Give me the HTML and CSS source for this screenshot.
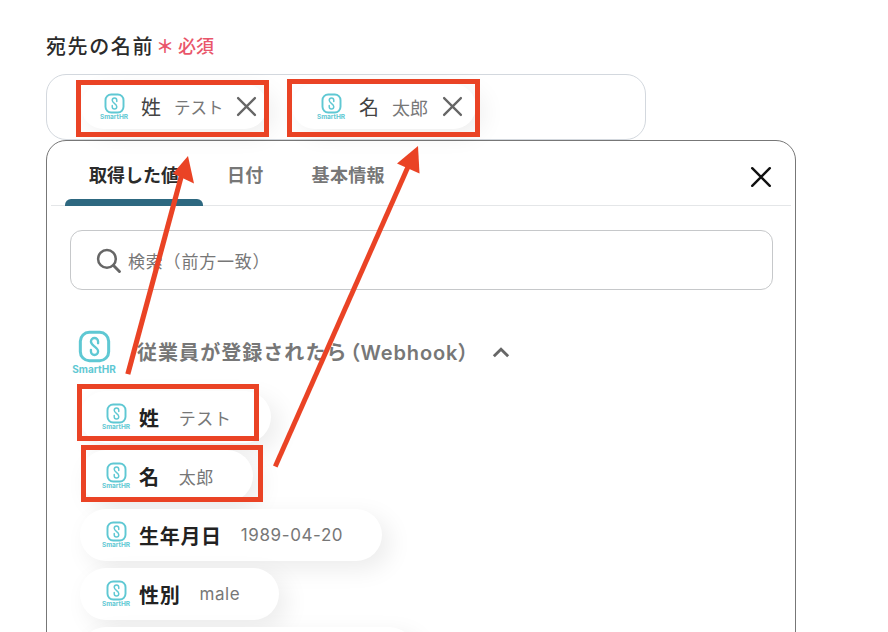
FILE: index.html
```html
<!DOCTYPE html>
<html lang="ja">

<head>
    <meta charset="UTF-8">
    <title>宛先の名前</title>
    <link rel="stylesheet" href="styles.css">
</head>

<body>
    <svg class="defs" width="0" height="0">
        <symbol id="hr-icon" viewBox="0 0 24 24">
            <rect x="1.7" y="1.7" width="20.600" height="20.600" rx="6.500" fill="none" stroke="#5fc8d3" stroke-width="2.2" />
            <path d="M14.600 9.600V8.400a2.600 2.600 0 0 0-5.200 0c0 1.700 1 2.400 2.600 3.600s2.600 1.900 2.600 3.600a2.600 2.600 0 0 1-5.200 0v-1.200" fill="none" stroke="#5fc8d3" stroke-width="1.700" stroke-linecap="round" />
        </symbol>
        <symbol id="close-icon" viewBox="0 0 20 20">
            <path d="M2 2L18 18M18 2L2 18" fill="none" stroke="currentColor" stroke-width="2.200" stroke-linecap="round" />
        </symbol>
    </svg>

    <div class="page">
        <div class="label">
            <span class="label-name">宛先の名前</span>
            <span class="label-star">＊</span>
            <span class="label-req">必須</span>
        </div>

        <div class="field">
            <div class="tag tag-first">
                <div class="logo"><svg><use href="#hr-icon" /></svg><span>SmartHR</span></div>
                <span class="tag-name">姓</span>
                <span class="tag-value">テスト</span>
                <svg class="tag-close"><use href="#close-icon" /></svg>
            </div>
            <div class="tag tag-second">
                <div class="logo"><svg><use href="#hr-icon" /></svg><span>SmartHR</span></div>
                <span class="tag-name">名</span>
                <span class="tag-value">太郎</span>
                <svg class="tag-close"><use href="#close-icon" /></svg>
            </div>
        </div>

        <div class="panel">
            <div class="tabs">
                <div class="tab tab-active">取得した値</div>
                <div class="tab">日付</div>
                <div class="tab">基本情報</div>
                <svg class="panel-close"><use href="#close-icon" /></svg>
            </div>

            <div class="search">
                <svg class="search-icon" viewBox="0 0 24 24">
                    <circle cx="10.500" cy="10.500" r="8.500" fill="none" stroke="#666" stroke-width="2.400" />
                    <path d="M16.800 16.800L22.500 22.500" fill="none" stroke="#666" stroke-width="2.800" stroke-linecap="round" />
                </svg>
                <span>検索（前方一致）</span>
            </div>

            <div class="group">
                <div class="logo logo-big"><svg><use href="#hr-icon" /></svg><span>SmartHR</span></div>
                <span class="group-title">従業員が登録されたら<span class="group-api">（Webhook）</span></span>
                <svg class="chevron" viewBox="0 0 16 10">
                    <path d="M1.500 8.500L8 2L14.500 8.500" fill="none" stroke="#666" stroke-width="2.600" />
                </svg>
            </div>

            <div class="chips">
                <div class="chip">
                    <div class="logo"><svg><use href="#hr-icon" /></svg><span>SmartHR</span></div>
                    <span class="chip-name">姓</span>
                    <span class="chip-value">テスト</span>
                </div>
                <div class="chip">
                    <div class="logo"><svg><use href="#hr-icon" /></svg><span>SmartHR</span></div>
                    <span class="chip-name">名</span>
                    <span class="chip-value">太郎</span>
                </div>
                <div class="chip">
                    <div class="logo"><svg><use href="#hr-icon" /></svg><span>SmartHR</span></div>
                    <span class="chip-name">生年月日</span>
                    <span class="chip-value">1989-04-20</span>
                </div>
                <div class="chip">
                    <div class="logo"><svg><use href="#hr-icon" /></svg><span>SmartHR</span></div>
                    <span class="chip-name">性別</span>
                    <span class="chip-value">male</span>
                </div>
                <div class="chip chip-cut"></div>
            </div>
        </div>

        <!-- red annotations drawn over the screenshot -->
        <svg class="marks" viewBox="0 0 888 632">
            <g fill="none" stroke="#ea4325" stroke-width="5">
                <rect x="78.500" y="82.500" width="188" height="52" />
                <rect x="289.500" y="81.500" width="188" height="53" />
                <rect x="79.500" y="386.500" width="177" height="52" />
                <rect x="83.500" y="447.500" width="177" height="52" />
            </g>
            <g fill="#ea4325">
                <path d="M125.300 373.500L130.300 374.700L184 176L179 175Z" />
                <path d="M188 156L173 173.500L194 183.500Z" />
                <path d="M273 465.500L277.500 467.500L411.500 165L407 163Z" />
                <path d="M418 146L397 163.500L419.500 173.500Z" />
            </g>
        </svg>
    </div>
</body>

</html>
```

FILE: styles.css
```css
html,
body {
    margin: 0;
    height: 100%;
    overflow: hidden;
    background: #fff;
}

body {
    font-family: Inter, "Noto Sans CJK JP", sans-serif;
    color: #333;
}

.defs {
    position: absolute;
}

.page {
    position: relative;
    width: 888px;
    height: 632px;
    overflow: hidden;
    padding: 30px 0 0 46px;
    box-sizing: border-box;
}

.marks {
    position: absolute;
    left: 0;
    top: 0;
    width: 888px;
    height: 632px;
}

.label {
    display: flex;
    align-items: center;
    height: 30px;
}

.label-name {
    font-size: 20px;
    font-weight: 500;
    letter-spacing: 1.600px;
    color: #2b2b2b;
}

.label-star {
    margin-left: 2px;
    width: 22px;
    font-size: 18px;
    font-weight: 700;
    color: #e9566a;
}

.label-req {
    font-size: 18px;
    color: #e9566a;
    font-weight: 500;
}

.field {
    display: flex;
    gap: 25px;
    width: 600px;
    height: 66px;
    margin-top: 14px;
    padding: 9px 0 0 34px;
    box-sizing: border-box;
    border: 1px solid #d3d8de;
    border-radius: 20px;
}

.tag {
    display: flex;
    align-items: center;
    width: 186px;
    height: 45px;
    box-sizing: border-box;
    padding-left: 19px;
    border-radius: 24px;
    background: #fff;
    box-shadow: 8px 6px 24px rgba(0, 0, 0, 0.07);
}

.tag-second {
    width: 184px;
    padding-left: 25px;
}

.tag-name {
    margin-left: 13px;
    font-size: 20px;
    color: #444;
}

.tag-value {
    margin-left: 13px;
    font-size: 16.500px;
    color: #777;
}

.tag-second .tag-name {
    margin-left: 14px;
}

.tag-second .tag-value {
    font-size: 18px;
}

.tag-close {
    width: 21px;
    height: 21px;
    margin-left: auto;
    margin-right: 10px;
    color: #666;
}

.tag-second .tag-close {
    margin-right: 13px;
}

.logo {
    display: flex;
    flex-direction: column;
    align-items: center;
    width: 28px;
    flex-shrink: 0;
}

.logo svg {
    width: 21px;
    height: 21px;
}

.logo span {
    font-size: 6.500px;
    line-height: 7px;
    font-weight: 700;
    color: #5fc8d3;
    white-space: nowrap;
}

.logo-big {
    width: 46px;
}

.logo-big svg {
    width: 33px;
    height: 33px;
}

.logo-big span {
    font-size: 10px;
    line-height: 12px;
}

.panel {
    width: 750px;
    height: 560px;
    box-sizing: border-box;
    border: 1px solid #777;
    border-radius: 20px;
    background: #fff;
}

.tabs {
    position: relative;
    display: flex;
    align-items: stretch;
    height: 64px;
    margin: 0 4px;
    padding-left: 14px;
    border-bottom: 1px solid #e4e6e8;
}

.tab {
    position: relative;
    padding: 22px 24px 0;
    font-size: 18px;
    line-height: 26px;
    font-weight: 700;
    letter-spacing: 0.300px;
    color: #777;
}

.tab-active {
    letter-spacing: 0;
    color: #2b2b2b;
}

.tab-active::after {
    content: "";
    position: absolute;
    left: 0;
    right: 0;
    bottom: -1px;
    height: 7px;
    border-radius: 6px 6px 0 0;
    background: #2d6880;
}

.panel-close {
    position: absolute;
    right: 19px;
    top: 25px;
    width: 22px;
    height: 22px;
    color: #111;
}

.search {
    display: flex;
    align-items: center;
    height: 60px;
    margin: 24px 22px 0 23px;
    box-sizing: border-box;
    padding-left: 25px;
    border: 1px solid #c6c8ca;
    border-radius: 12px;
    font-size: 17px;
    letter-spacing: 0.800px;
    color: #777;
}

.search-icon {
    width: 25px;
    height: 25px;
    margin-right: 7px;
}

.group {
    display: flex;
    align-items: center;
    height: 50px;
    margin: 37px 0 0 24px;
}

.group-title {
    margin-left: 20px;
    margin-bottom: 2px;
    font-size: 20px;
    font-weight: 600;
    letter-spacing: 1.050px;
    color: #777;
}

.group-api {
    padding-left: 2px;
    font-feature-settings: "palt";
    letter-spacing: 0.900px;
}

.chevron {
    width: 18px;
    height: 11px;
    margin-left: 23px;
}

.chips {
    display: flex;
    flex-direction: column;
    align-items: flex-start;
    gap: 7px;
    margin: 14px 0 0 33px;
}

.chip {
    display: flex;
    align-items: center;
    height: 52px;
    box-sizing: border-box;
    padding: 0 39px 0 22px;
    border-radius: 26px;
    background: #fff;
    box-shadow: 8px 8px 24px rgba(0, 0, 0, 0.08);
}

.chip-name {
    margin-left: 9px;
    font-size: 20px;
    font-weight: 700;
    letter-spacing: 0.700px;
    color: #222;
}

.chip-value {
    margin-left: 19px;
    font-size: 17px;
    letter-spacing: 0.600px;
    color: #777;
}

.chip-cut {
    width: 335px;
}
```
